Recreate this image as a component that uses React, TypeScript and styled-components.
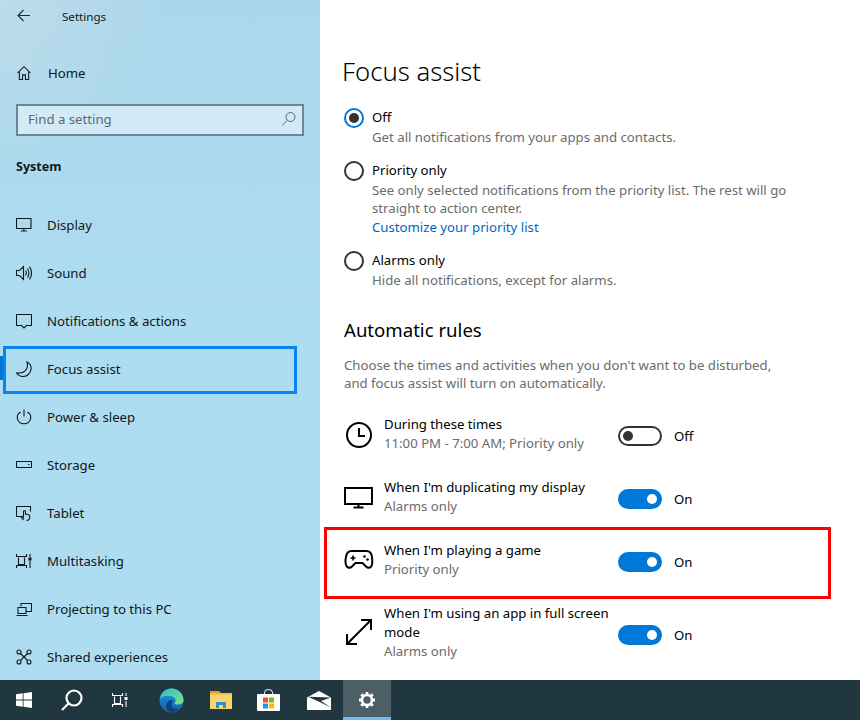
import React from "react";
import styled, { createGlobalStyle } from "styled-components";

const Global = createGlobalStyle`
  html, body { margin: 0; padding: 0; background: #fff; }
  body { font-family: "Noto Sans", "Open Sans", sans-serif; font-size: 13.2px; color: #000; }
  *, *::before, *::after { box-sizing: border-box; }
`;

const Screen = styled.div`
  width: 860px; height: 720px; position: relative; overflow: hidden;
  display: flex; flex-direction: column;
`;
const Body = styled.div`display: flex; height: 680px;`;
const Sidebar = styled.aside`
  width: 320px; height: 680px; flex: none; overflow: hidden; color: #101820;
  background:
    radial-gradient(ellipse 170px 170px at 0 0, #bcdcea 0%, rgba(188,220,234,0) 100%),
    linear-gradient(180deg, #abd6eb 0%, #aedcf0 45%, #aedcf0 100%);
`;
const Header = styled.div`height: 32px; display: flex; align-items: center; padding-left: 17px;`;
const HeaderTitle = styled.span`margin-left: 31px; font-size: 11.6px;`;
const Home = styled.div`
  height: 48px; margin-top: 17px; display: flex; align-items: center; padding-left: 17px; gap: 17px;
`;
const Search = styled.div`
  margin: 7px 16px 0; height: 32px; border: 2px solid #6a8799; background: rgba(232,246,252,.62);
  display: flex; align-items: center; justify-content: space-between; padding: 0 5px 3px 10px;
  color: #5c6a72;
`;
const SystemTitle = styled.div`margin: 20px 0 25px 16px; height: 20px; line-height: 21px; font-weight: 700; font-size: 12.5px;`;
const NavRow = styled.div<{ $active?: boolean }>`
  height: 48px; display: flex; align-items: center; padding-left: 16px; gap: 15px; position: relative;
  ${p => p.$active && `
    &::before { content: ""; position: absolute; left: 0; top: 11px; width: 4px; height: 24px; background: #0078d7; }
    &::after { content: ""; position: absolute; left: 3px; top: 1px; width: 294px; height: 48px; border: 3px solid #0a84f5; }
  `}
`;
const IconBox = styled.span`width: 16px; display: flex; justify-content: center; flex: none;`;
const Main = styled.main`flex: 1; padding: 0 30px 0 22px; overflow: hidden; position: relative;`;
const Title = styled.h1`margin: 50px 0 0; height: 44px; line-height: 44px; font-size: 25.7px; font-weight: 300;`;
const RadioGroup = styled.div`margin-top: 14px; padding-left: 2px; display: flex; flex-direction: column; gap: 14px;`;
const RadioRow = styled.div`display: flex; gap: 8px;`;
const RadioCircle = styled.span<{ $on?: boolean }>`
  width: 20px; height: 20px; border-radius: 50%; border: 2px solid ${p => (p.$on ? "#0078d7" : "#333")};
  flex: none; display: flex; align-items: center; justify-content: center;
  ${p => p.$on && `&::after { content: ""; width: 10px; height: 10px; border-radius: 50%; background: #333; }`}
`;
const Label = styled.div`line-height: 19px; margin-bottom: 1px;`;
const Desc = styled.div`line-height: 18.7px; color: #6b6b6b;`;
const Link = styled.div`line-height: 19px; color: #0067c0;`;
const Subhead = styled.h2`margin: 25px 0 0 2px; height: 30px; line-height: 30px; font-size: 18.6px; font-weight: 400;`;
const Para = styled.p`margin: 11px 0 0 2px; line-height: 18.5px; color: #6b6b6b; width: 445px;`;
const Rules = styled.div`margin-top: 22px; display: flex; flex-direction: column; gap: 25px; padding-left: 2px;`;
const Rule = styled.div`display: flex; align-items: center;`;
const RuleIcon = styled.span`width: 40px; flex: none; display: flex; justify-content: flex-start;`;
const RuleText = styled.div`width: 234px; flex: none;`;
const RuleLabel = styled.div`line-height: 19px;`;
const RuleDesc = styled.div`line-height: 19px; color: #6b6b6b;`;
const ToggleGroup = styled.div`display: flex; align-items: center; margin-top: 5px;`;
const Toggle = styled.span<{ $on?: boolean }>`
  width: 44px; height: 20px; border-radius: 10px; flex: none; display: flex; align-items: center; padding: 0 3px;
  justify-content: ${p => (p.$on ? "flex-end" : "flex-start")};
  background: ${p => (p.$on ? "#0078d7" : "#fff")};
  border: 2px solid ${p => (p.$on ? "#0078d7" : "#333")};
  &::after { content: ""; width: 10px; height: 10px; border-radius: 50%; background: ${p => (p.$on ? "#fff" : "#333")}; }
`;
const ToggleLabel = styled.span`margin-left: 12px;`;
const Highlight = styled.div`
  position: absolute; left: 324px; top: 527px; width: 507px; height: 72px; border: 3px solid #f00; pointer-events: none;
`;
const Taskbar = styled.footer`height: 40px; background: #21373f; display: flex; align-items: center;`;
const TaskItem = styled.span<{ $w?: number; $active?: boolean }>`
  width: ${p => p.$w ?? 48}px; height: 40px; flex: none; display: flex; align-items: center; justify-content: center;
  ${p => p.$active && `background: #4a5f66; border-bottom: 3px solid #76b9ed; padding-top: 3px;`}
`;

const S = { fill: "none", stroke: "currentColor", strokeWidth: 1.1 } as const;
const Ic = ({ w = 16, h = 16, children }: { w?: number; h?: number; children: React.ReactNode }) => (
  <svg width={w} height={h} viewBox={`0 0 ${w} ${h}`} {...S}>{children}</svg>
);

const nav: [string, React.ReactNode, boolean?][] = [
  ["Display", <Ic><path d="M.5 1.500h14.500v10H.5zM7.800 11.500v2.500M4.800 14h6" /></Ic>],
  ["Sound", <Ic><path d="M.5 5.500h3l4-4v13l-4-4h-3zM9.500 5.500c1 1.500 1 3.500 0 5M11.500 3.500c1.800 2.500 1.800 6.500 0 9M13.500 1.500c2.500 4 2.500 9 0 13" /></Ic>],
  ["Notifications & actions", <Ic><path d="M.5 1.500h15v11h-5l-2.500 2.500-2.500-2.500h-5z" /></Ic>],
  ["Focus assist", <Ic><path d="M11 1C14 2.500 15.500 5.500 15 8.500 14.500 12.500 11 15.500 7 15.500 4.500 15.500 2 14.300.7 12 5 12.500 9 11 10.700 7.500 11.600 5.500 11.700 3 11 1z" /></Ic>, true],
  ["Power & sleep", <Ic><path d="M8 .5v7M4.500 3C2 4.500.8 7 1.500 9.800c.8 3 3.500 5 6.500 5s5.700-2 6.500-5C15.200 7 14 4.500 11.500 3" /></Ic>],
  ["Storage", <Ic><path d="M.5 4.500h15v6H.5zM12 7.500h1.500" /></Ic>],
  ["Tablet", <Ic><path d="M4.500 11.500H.5v-10h14v5M7.500 15c-1-1-2-2-2.500-3 0-1 1-1 1.500-.3l1 1V6.500c0-1.300 2-1.300 2 0V9l3 .7c1.300.3 1.500 1.300 1.300 2.300-.2 2-1.300 3.500-3.300 3.500" /></Ic>],
  ["Multitasking", <Ic><path d="M.5 1v2.500h10V1M.5 15v-2.500h10V15M2.500 4.500v7h6v-7M14 1v3M14 8v7" /><rect x="13" y="5" width="2" height="2" fill="currentColor" /></Ic>],
  ["Projecting to this PC", <Ic><path d="M5 5.500V2.500h10.500v8H10M2 6.500h8v6H2zM.5 14.500h11" /></Ic>],
  ["Shared experiences", <Ic><path d="M4.500 4.500l7 7M11.500 4.500l-7 7" /><circle cx="3" cy="3" r="2" /><circle cx="13" cy="3" r="2" /><circle cx="3" cy="13" r="2" /><circle cx="13" cy="13" r="2" /></Ic>],
];

const R = { fill: "none", stroke: "#000", strokeWidth: 2 } as const;

export default function App() {
  return (
    <>
      <Global />
      <Screen>
        <Body>
          <Sidebar>
            <Header>
              <svg width="14" height="14" viewBox="0 0 14 14" fill="none" stroke="#1c2a30" strokeWidth="1.1"><path d="M13 6.500H1M6.500 1 1 6.500 6.500 12" /></svg>
              <HeaderTitle>Settings</HeaderTitle>
            </Header>
            <Home>
              <svg width="14" height="14" viewBox="0 0 15 15" fill="none" stroke="currentColor" strokeWidth="1.100"><path d="M.5 7.500 7.500.8l7 6.700M2.500 6v8.500h3.500V9.500h3v5h3.500V6" /></svg>
              <span>Home</span>
            </Home>
            <Search>
              <span>Find a setting</span>
              <svg width="16" height="16" viewBox="0 0 16 16" fill="none" stroke="#5c6a72" strokeWidth="1"><circle cx="9.500" cy="6" r="4.500" /><path d="M6.300 9.300 1 14.500" /></svg>
            </Search>
            <SystemTitle>System</SystemTitle>
            {nav.map(([t, icon, active]) => (
              <NavRow key={t} $active={active}>
                <IconBox>{icon}</IconBox>
                <span>{t}</span>
              </NavRow>
            ))}
          </Sidebar>
          <Main>
            <Title>Focus assist</Title>
            <RadioGroup>
              <RadioRow>
                <RadioCircle $on />
                <div>
                  <Label>Off</Label>
                  <Desc>Get all notifications from your apps and contacts.</Desc>
                </div>
              </RadioRow>
              <RadioRow>
                <RadioCircle />
                <div>
                  <Label>Priority only</Label>
                  <Desc>See only selected notifications from the priority list. The rest will go<br />straight to action center.</Desc>
                  <Link>Customize your priority list</Link>
                </div>
              </RadioRow>
              <RadioRow>
                <RadioCircle />
                <div>
                  <Label>Alarms only</Label>
                  <Desc>Hide all notifications, except for alarms.</Desc>
                </div>
              </RadioRow>
            </RadioGroup>
            <Subhead>Automatic rules</Subhead>
            <Para>Choose the times and activities when you don't want to be disturbed, and focus assist will turn on automatically.</Para>
            <Rules>
              <Rule>
                <RuleIcon><svg width="29" height="30" viewBox="-1 -2 29 30" {...R}><circle cx="14" cy="14" r="12" /><path d="M14 7v8h6" /></svg></RuleIcon>
                <RuleText><RuleLabel>During these times</RuleLabel><RuleDesc>11:00 PM - 7:00 AM; Priority only</RuleDesc></RuleText>
                <ToggleGroup><Toggle /><ToggleLabel>Off</ToggleLabel></ToggleGroup>
              </Rule>
              <Rule>
                <RuleIcon><svg width="29" height="24" viewBox="0 0 29 24" {...R}><path d="M1 3h27v16H1zM14.500 19v3M9.500 22.500h10" /></svg></RuleIcon>
                <RuleText><RuleLabel>When I'm duplicating my display</RuleLabel><RuleDesc>Alarms only</RuleDesc></RuleText>
                <ToggleGroup><Toggle $on /><ToggleLabel>On</ToggleLabel></ToggleGroup>
              </Rule>
              <Rule>
                <RuleIcon><svg width="30" height="22" viewBox="0 0 29 22" {...R}><path d="M7 2h15c3 0 5 2 5.500 6 .5 4 .5 7-.5 9-1 2-3 2-5 1l-4-4H11l-4 4c-2 1-4 1-5-1S.5 12 1.500 8C2 4 4 2 7 2z" /><path d="M6 9h5M8.500 6.500v5" strokeWidth="1.600" /><circle cx="20" cy="7.500" r="1.300" fill="#000" stroke="none" /><circle cx="23" cy="10.500" r="1.300" fill="#000" stroke="none" /></svg></RuleIcon>
                <RuleText><RuleLabel>When I'm playing a game</RuleLabel><RuleDesc>Priority only</RuleDesc></RuleText>
                <ToggleGroup><Toggle $on /><ToggleLabel>On</ToggleLabel></ToggleGroup>
              </Rule>
              <Rule>
                <RuleIcon><svg width="29" height="28" viewBox="-1 0 29 28" {...R}><path d="M2 26 26 2M16 2h10v10M2 16v10h10" /></svg></RuleIcon>
                <RuleText><RuleLabel>When I'm using an app in full screen<br />mode</RuleLabel><RuleDesc>Alarms only</RuleDesc></RuleText>
                <ToggleGroup><Toggle $on /><ToggleLabel>On</ToggleLabel></ToggleGroup>
              </Rule>
            </Rules>
          </Main>
        </Body>
        <Taskbar>
          <TaskItem>
            <svg width="16" height="16" viewBox="0 0 16 16" fill="#fff"><path d="M0 2.300 6.700 1.300v6.300H0zM7.500 1.200 16 0v7.600H7.500zM0 8.400h6.700v6.300L0 13.700zM7.500 8.400H16V16l-8.500-1.200z" /></svg>
          </TaskItem>
          <TaskItem>
            <svg width="24" height="24" viewBox="0 0 24 24" fill="none" stroke="#fff" strokeWidth="2.200"><circle cx="14" cy="10" r="7.500" /><path d="M8.500 15.500 2 22" /></svg>
          </TaskItem>
          <TaskItem>
            <svg width="16" height="16" viewBox="0 0 16 16" fill="none" stroke="#fff" strokeWidth="1.100"><path d="M.5 1v2.500h10V1M.5 15v-2.500h10V15M2.500 4.500v7h6v-7M14 1v3M14 9v6" /><rect x="12.500" y="5" width="3" height="3" fill="#fff" stroke="none" /></svg>
          </TaskItem>
          <TaskItem $w={54}>
            <svg width="25" height="25" viewBox="0 0 25 25">
              <defs>
                <linearGradient id="edgeA" x1="0" y1="0" x2="1" y2="1"><stop offset="0" stopColor="#2cc3d5" /><stop offset="1" stopColor="#7fe07a" /></linearGradient>
                <linearGradient id="edgeB" x1="0" y1="0" x2="0" y2="1"><stop offset="0" stopColor="#1b9de2" /><stop offset="1" stopColor="#0f5ea8" /></linearGradient>
              </defs>
              <circle cx="12.500" cy="12.500" r="12" fill="url(#edgeB)" />
              <path d="M1 11C2 4.500 7 .5 12.500.5 19 .5 24.500 5.500 24.500 12c0 3-2.500 4.500-5.500 4.500-2 0-3.500-.5-3.500-1.500 2-1.500 1.500-5-2-6.500C9 7 4 7.500 1 11z" fill="url(#edgeA)" />
              <path d="M13 24C8 24 6 19 8 15c1-2 3-3.500 5.500-3 .5 2-1 3.500-1 5 0 2.500 3 4.500 7 3.500-1.500 2-4 3.500-6.500 3.500z" fill="#123f7c" />
            </svg>
          </TaskItem>
          <TaskItem $w={45}>
            <svg width="22" height="18" viewBox="0 0 22 18"><path d="M0 0h9l2 2h-11z" fill="#d99f26" /><rect y="2" width="22" height="16" fill="#fbd568" /><path d="M0 2h22v2H0z" fill="#eec04c" /><path d="M6 17v-6h10v6h-3v-3H9v3z" fill="#2a8fd8" /></svg>
          </TaskItem>
          <TaskItem $w={51}>
            <svg width="23" height="22" viewBox="0 0 23 22">
              <path d="M7.500 5V3.500a4 3 0 0 1 8 0V5" fill="none" stroke="#fff" strokeWidth="1" />
              <rect y="5" width="23" height="17" rx="1" fill="#fff" />
              <rect x="6" y="8.500" width="5" height="5" fill="#f25022" /><rect x="12" y="8.500" width="5" height="5" fill="#7fba00" />
              <rect x="6" y="14.500" width="5" height="5" fill="#00a4ef" /><rect x="12" y="14.500" width="5" height="5" fill="#ffb900" />
            </svg>
          </TaskItem>
          <TaskItem $w={49}>
            <svg width="24" height="19" viewBox="0 0 24 19" fill="#fff"><path d="M12 0 24 6.500V19H0V6.500z" /><path d="M1 5.800 24 6.500 14 10 24 16.500 11.500 10.500z" fill="#21373f" /></svg>
          </TaskItem>
          <TaskItem $active>
            <svg width="18" height="18" viewBox="0 0 18 18"><g fill="none" stroke="#fff"><circle cx="9" cy="9" r="5" strokeWidth="2.600" /><path d="M9 1v3M9 14v3M1 9h3M14 9h3M3.300 3.300l2.100 2.100M12.600 12.600l2.100 2.100M3.300 14.700l2.100-2.100M12.600 5.400l2.100-2.100" strokeWidth="2.800" /></g></svg>
          </TaskItem>
        </Taskbar>
        <Highlight />
      </Screen>
    </>
  );
}
